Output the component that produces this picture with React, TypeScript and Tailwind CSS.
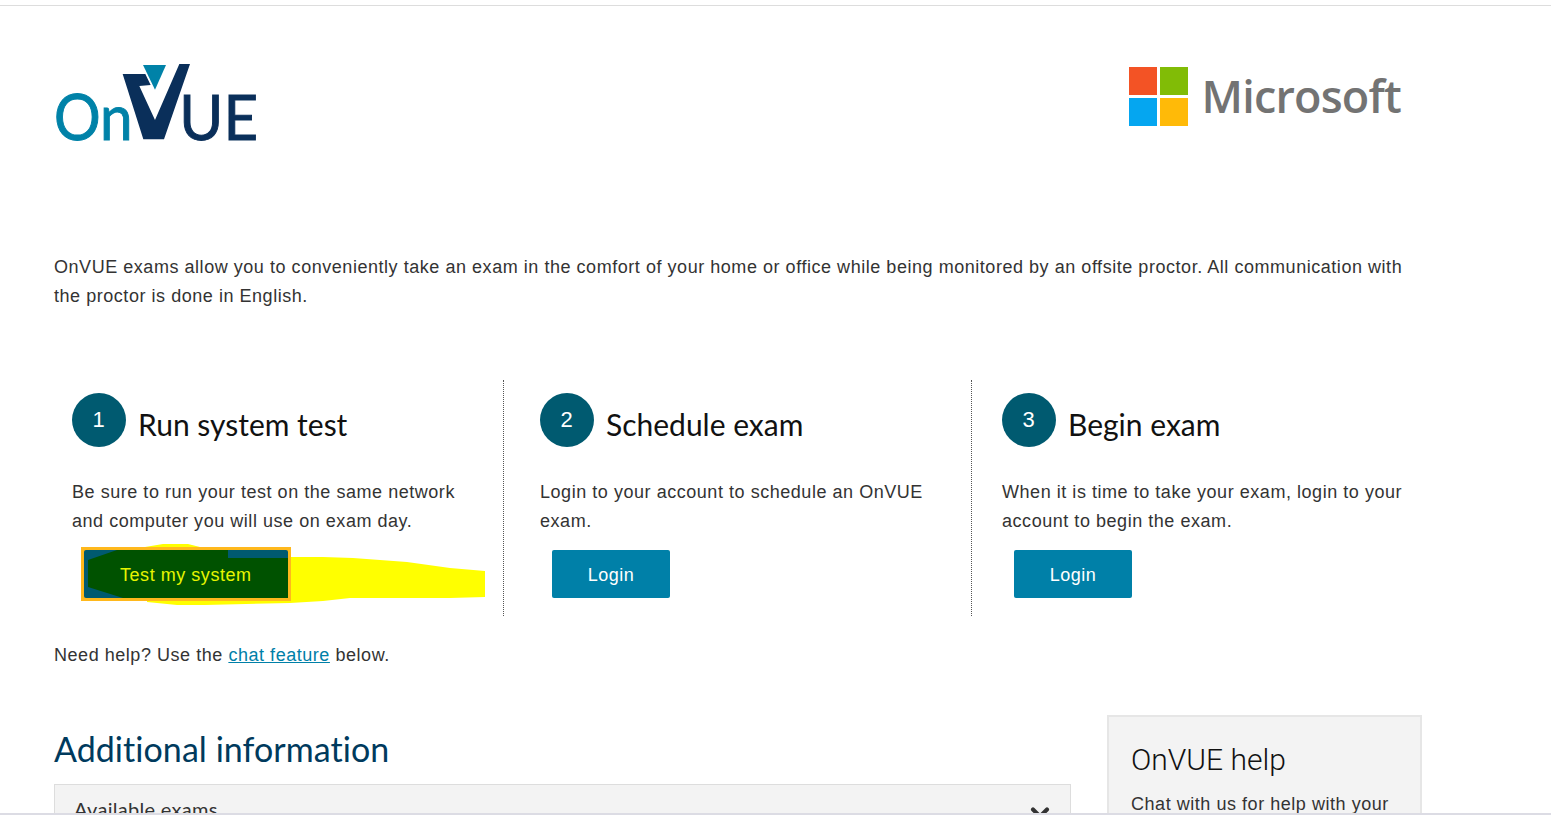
import { ChevronDown } from "lucide-react";

const body = "font-['Liberation_Sans',Arial,sans-serif]";
const heading = "font-['Lato',sans-serif]";

const OnVueLogo = () => (
  <svg viewBox="0 0 720 330" className="block w-[240px] h-[110px]" aria-label="OnVUE">
    <text x="42" y="271" fontFamily="Lato, sans-serif" fontWeight="400" fontSize="194" fill="#0082a8" stroke="#0082a8" strokeWidth="3" textLength="236" lengthAdjust="spacingAndGlyphs">On</text>
    <text x="418" y="271" fontFamily="Lato, sans-serif" fontWeight="400" fontSize="188" fill="#0a2f5a" stroke="#0a2f5a" strokeWidth="3" textLength="236" lengthAdjust="spacingAndGlyphs">UE</text>
    <path d="M248 72 L316 72 L332 105 L298 108 L345 210 L418 42 L450 42 L372 268 L310 268 Z" fill="#0a2f5a" />
    <path d="M309 45 L378 45 L345 119 Z" fill="#0082a8" />
  </svg>
);

const MicrosoftLogo = () => (
  <div className="flex items-center gap-[14px]">
    <div className="grid grid-cols-[28px_28px] grid-rows-[28px_28px] gap-[3px]">
      <div className="bg-[#f35325]" />
      <div className="bg-[#81bc06]" />
      <div className="bg-[#05a6f0]" />
      <div className="bg-[#ffba08]" />
    </div>
    <span className="font-['Open_Sans',sans-serif] font-semibold text-[45px] leading-none text-[#737373] tracking-[-0.8px] mt-[-3px]">Microsoft</span>
  </div>
);

const Highlight = () => (
  <svg viewBox="0 0 405 64" className="absolute left-[-3px] top-[-7px] w-[405px] h-[64px] pointer-events-none" aria-hidden="true">
    <path d="M64 4 L82 1 L107 1 L119 4 L209 14 L242 14 L272 15 L326 19 L369 25 L404 28 L404 54 L369 55 L316 55 L269 55 L242 58 L209 60 L124 62 L96 62 L66 59 Z" fill="#ffff00" />
    <rect x="0" y="4" width="210" height="54" fill="#ffb81c" />
    <rect x="3" y="7" width="204" height="48" rx="2" fill="#005a70" />
    <path d="M7 17 L36 7 L147 7 L147 15 L207 15 L207 55 L42 55 L7 44 Z" fill="#005200" />
  </svg>
);

const Step = ({ n, title, children, pad, border }: { n: number; title: string; children: React.ReactNode; pad: string; border?: boolean }) => (
  <div className={`${pad} ${border ? "border-r border-dotted border-[#555]" : ""} h-[236px] pt-[13px]`}>
    <div className="flex items-center gap-[12px]">
      <div className="w-[54px] h-[54px] rounded-full bg-[#005a70] text-white flex items-center justify-center text-[22px] pb-[2px]">{n}</div>
      <h2 className={`${heading} text-[30px] leading-[36px] text-[#111] mt-[8px] tracking-normal`}>{title}</h2>
    </div>
    {children}
  </div>
);

export default function App() {
  return (
    <div className={`${body} relative w-full h-[819px] bg-white overflow-hidden text-[18px] text-[#333] tracking-[0.54px]`}>
      <div className="h-[815px] pt-[5px] overflow-hidden border-b-2 border-[#dcdce4]">
        <div className="border-t border-[#ddd]" />

        <div className="flex justify-between items-start pl-[40px] pr-[150px] pt-[44px] h-[200px] tracking-normal">
          <OnVueLogo />
          <div className="pt-[17px]">
            <MicrosoftLogo />
          </div>
        </div>

        <p className="ml-[54px] w-[1360px] leading-[29px] mt-[47px]">
          OnVUE exams allow you to conveniently take an exam in the comfort of your home or office while being monitored by an offsite proctor. All communication with the proctor is done in English.
        </p>

        <div className="grid grid-cols-[450px_468px_1fr] ml-[54px] mt-[69px]">
          <Step n={1} title="Run system test" pad="pl-[18px]" border>
            <p className="leading-[29px] mt-[31px] w-[400px]">Be sure to run your test on the same network and computer you will use on exam day.</p>
            <div className="relative ml-[12px] mt-[14px] w-[204px] h-[48px] flex items-center">
              <Highlight />
              <span className="relative pl-[36px] pt-[2px] text-[#e6f500]">Test my system</span>
            </div>
          </Step>
          <Step n={2} title="Schedule exam" pad="pl-[36px]" border>
            <p className="leading-[29px] mt-[31px] w-[420px]">Login to your account to schedule an OnVUE exam.</p>
            <button className="ml-[12px] mt-[14px] w-[118px] h-[48px] pt-[2px] rounded-[2px] bg-[#0080a8] text-white">Login</button>
          </Step>
          <Step n={3} title="Begin exam" pad="pl-[30px]">
            <p className="leading-[29px] mt-[31px] w-[420px]">When it is time to take your exam, login to your account to begin the exam.</p>
            <button className="ml-[12px] mt-[14px] w-[118px] h-[48px] pt-[2px] rounded-[2px] bg-[#0080a8] text-white">Login</button>
          </Step>
        </div>

        <p className="ml-[54px] mt-[25px] leading-[29px]">
          Need help? Use the <a className="text-[#0080a8] underline">chat feature</a> below.
        </p>

        <div className="flex ml-[54px] mt-[45px] gap-[36px] items-start">
          <div className="w-[1017px] pt-[14px]">
            <h2 className={`${heading} text-[34px] leading-[40px] text-[#003a5d] tracking-[0.05px]`}>Additional information</h2>
            <div className="mt-[15px] h-[80px] border border-[#ddd] bg-[#f3f3f3] flex justify-between pl-[19px] pr-[16px] pt-[11px]">
              <span className={`${heading} text-[20px] leading-[26px] text-[#333] tracking-[0.3px]`}>Available exams</span>
              <ChevronDown className="w-[28px] h-[28px] text-[#333] mt-[3px]" strokeWidth={3.5} />
            </div>
          </div>
          <div className="w-[315px] h-[160px] border-2 border-[#e6e6e6] bg-[#f3f3f3] px-[22px] pt-[25px]">
            <h3 className="font-['Roboto',sans-serif] font-light text-[30px] leading-[36px] text-[#111] tracking-normal">OnVUE help</h3>
            <p className="mt-[12px] leading-[29px]">Chat with us for help with your</p>
          </div>
        </div>
      </div>
    </div>
  );
}
